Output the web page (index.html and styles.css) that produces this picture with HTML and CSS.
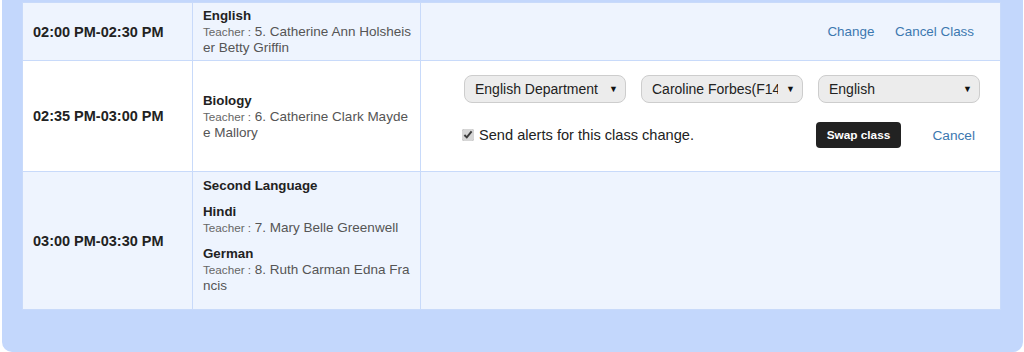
FILE: index.html
```html
<!DOCTYPE html>
<html lang="en">
<head>
    <meta charset="UTF-8">
    <meta name="viewport" content="width=device-width, initial-scale=1.0">
    <title>Timetable</title>
    <link rel="stylesheet" href="styles.css">
</head>
<body>
    <div class="panel">
        <table class="timetable">
            <colgroup>
                <col class="col-time">
                <col class="col-subject">
                <col>
            </colgroup>
            <tr class="row-alt">
                <td class="time">02:00 PM-02:30 PM</td>
                <td class="subject">
                    <div class="subject-name">English</div>
                    <div class="teacher"><span class="teacher-label">Teacher :</span> 5. Catherine Ann Holsheiser Betty Griffin</div>
                </td>
                <td class="actions">
                    <a href="#">Change</a>
                    <a href="#">Cancel Class</a>
                </td>
            </tr>
            <tr>
                <td class="time">02:35 PM-03:00 PM</td>
                <td class="subject">
                    <div class="subject-name">Biology</div>
                    <div class="teacher"><span class="teacher-label">Teacher :</span> 6. Catherine Clark Maydee Mallory</div>
                </td>
                <td class="swap-cell">
                    <form class="swap-form" action="#">
                        <div class="select-wrap">
                            <select>
                                <option>English Department</option>
                            </select>
                        </div>
                        <div class="select-wrap">
                            <select>
                                <option>Caroline Forbes(F1432)</option>
                            </select>
                        </div>
                        <div class="select-wrap">
                            <select>
                                <option>English</option>
                            </select>
                        </div>

                        <label class="alert-check">
                            <input type="checkbox" checked>
                            Send alerts for this class change.
                        </label>
                        <div class="swap-buttons">
                            <button type="submit" class="swap-btn">Swap class</button>
                            <a href="#">Cancel</a>
                        </div>
                    </form>
                </td>
            </tr>
            <tr class="row-alt">
                <td class="time">03:00 PM-03:30 PM</td>
                <td class="subject subject-group">
                    <div class="group-name">Second Language</div>
                    <div class="group-item">
                        <div class="subject-name">Hindi</div>
                        <div class="teacher"><span class="teacher-label">Teacher :</span> 7. Mary Belle Greenwell</div>
                    </div>
                    <div class="group-item">
                        <div class="subject-name">German</div>
                        <div class="teacher"><span class="teacher-label">Teacher :</span> 8. Ruth Carman Edna Francis</div>
                    </div>
                </td>
                <td></td>
            </tr>
        </table>
    </div>
</body>
</html>
```

FILE: styles.css
```css
body {
    margin: 0;
    font-family: "Liberation Sans", Arial, sans-serif;
    background-color: #fff;
    color: #222;
}

.panel {
    margin: 0 1px 1px 2px;
    padding: 2px 22px 42px 20px;
    background-color: #c3d7fc;
    border-radius: 0 0 10px 10px;
}

.timetable {
    width: 100%;
    table-layout: fixed;
    border-collapse: collapse;
    background-color: #fff;
}

.timetable td {
    border: 1px solid #c8dafa;
    vertical-align: middle;
}

.col-time {
    width: 170px;
}

.col-subject {
    width: 228px;
}

.row-alt td {
    background-color: #eef4fe;
}

.time {
    padding: 0 10px;
    font-size: 14.5px;
    font-weight: bold;
    color: #222;
}

.subject {
    padding: 5px 8px 4px 10px;
    line-height: 16px;
    word-break: break-all;
}

.subject-name,
.group-name {
    font-size: 13.3px;
    font-weight: bold;
    color: #222;
}

.teacher {
    font-size: 13.5px;
    color: #555;
}

.teacher-label {
    font-size: 11.7px;
    color: #666;
}

.subject-group {
    padding-top: 6px;
    padding-bottom: 5px;
}

.group-name,
.group-item {
    margin-bottom: 10px;
}

a {
    color: #3c78b0;
    text-decoration: none;
}

.actions {
    padding: 0 26px 0 0;
    text-align: right;
    font-size: 13.4px;
}

.actions a {
    margin-left: 17px;
}

.swap-cell {
    padding: 0;
}

.swap-form {
    display: grid;
    grid-template-columns: repeat(3, 162px);
    justify-content: end;
    column-gap: 15px;
    row-gap: 19px;
    padding: 14px 20px 23px 0;
}

.select-wrap {
    position: relative;
}

.select-wrap::after {
    content: "\25BC";
    position: absolute;
    right: 8px;
    top: 9px;
    font-size: 9px;
    color: #111;
    pointer-events: none;
}

.select-wrap select {
    appearance: none;
    -webkit-appearance: none;
    width: 100%;
    height: 28px;
    padding: 0 24px 0 10px;
    border: 1px solid #cdcdcd;
    border-radius: 8px;
    background-color: #ececec;
    font-family: inherit;
    font-size: 14px;
    color: #222;
}

.alert-check {
    grid-column: span 2;
    display: flex;
    align-items: center;
    margin-left: -2px;
    font-size: 14.6px;
    color: #222;
}

.alert-check input {
    width: 12px;
    height: 12px;
    margin: 0 5px 0 0;
    accent-color: #d6d6d6;
}

.swap-buttons {
    display: flex;
    align-items: center;
    justify-content: space-between;
    margin-left: -2px;
    padding-right: 5px;
    font-size: 13.7px;
}

.swap-btn {
    width: 85px;
    height: 26px;
    padding: 0;
    border: none;
    border-radius: 4px;
    background-color: #222;
    color: #fff;
    font-family: inherit;
    font-size: 11.8px;
    font-weight: bold;
    cursor: pointer;
}
```
